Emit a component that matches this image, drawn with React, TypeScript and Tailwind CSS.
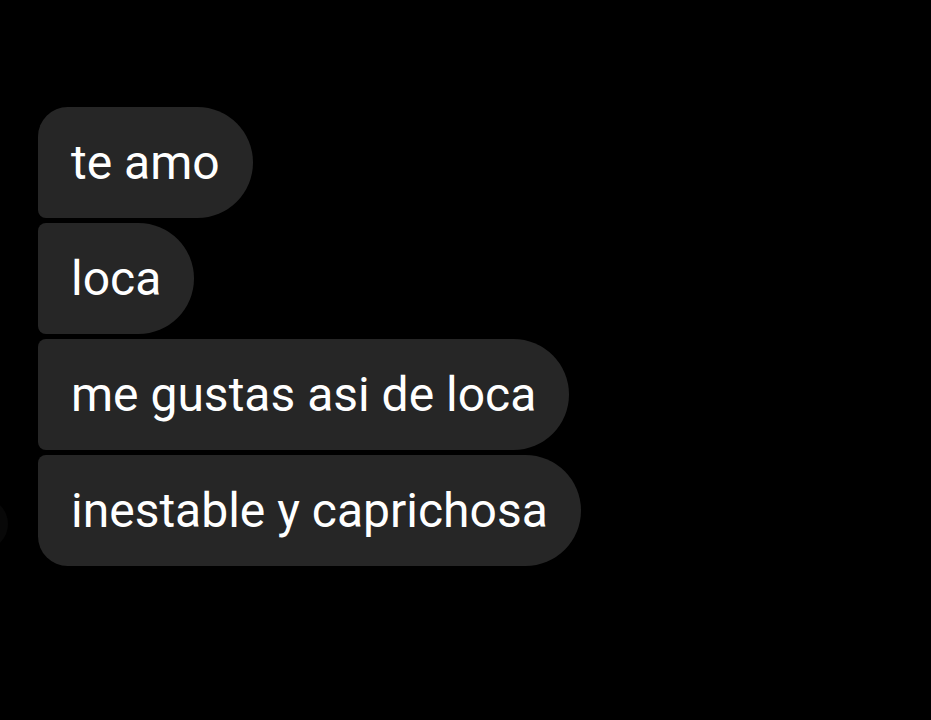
import React from "react";

const font = { fontFamily: "Roboto, 'Noto Sans', sans-serif" };

export default function App() {
  return (
    <div className="w-[931px] h-[720px] bg-black overflow-hidden relative" style={font}>
      <div className="absolute left-[-44px] top-[498px] w-[52px] h-[52px] rounded-full bg-[#080808]" />
      <div className="flex flex-col items-start gap-[5px] pt-[107px] pl-[38px]">
        <div className="h-[111px] flex items-center px-[33px] bg-[#262626] text-white text-[48px] rounded-tl-[30px] rounded-bl-[8px] rounded-r-[56px]">
          te amo
        </div>
        <div className="h-[111px] flex items-center px-[33px] bg-[#262626] text-white text-[48px] rounded-l-[8px] rounded-r-[56px]">
          loca
        </div>
        <div className="h-[111px] flex items-center px-[33px] bg-[#262626] text-white text-[48px] rounded-l-[8px] rounded-r-[56px]">
          me gustas asi de loca
        </div>
        <div className="h-[111px] flex items-center px-[33px] bg-[#262626] text-white text-[48px] rounded-tl-[8px] rounded-bl-[30px] rounded-r-[56px]">
          inestable y caprichosa
        </div>
      </div>
    </div>
  );
}
